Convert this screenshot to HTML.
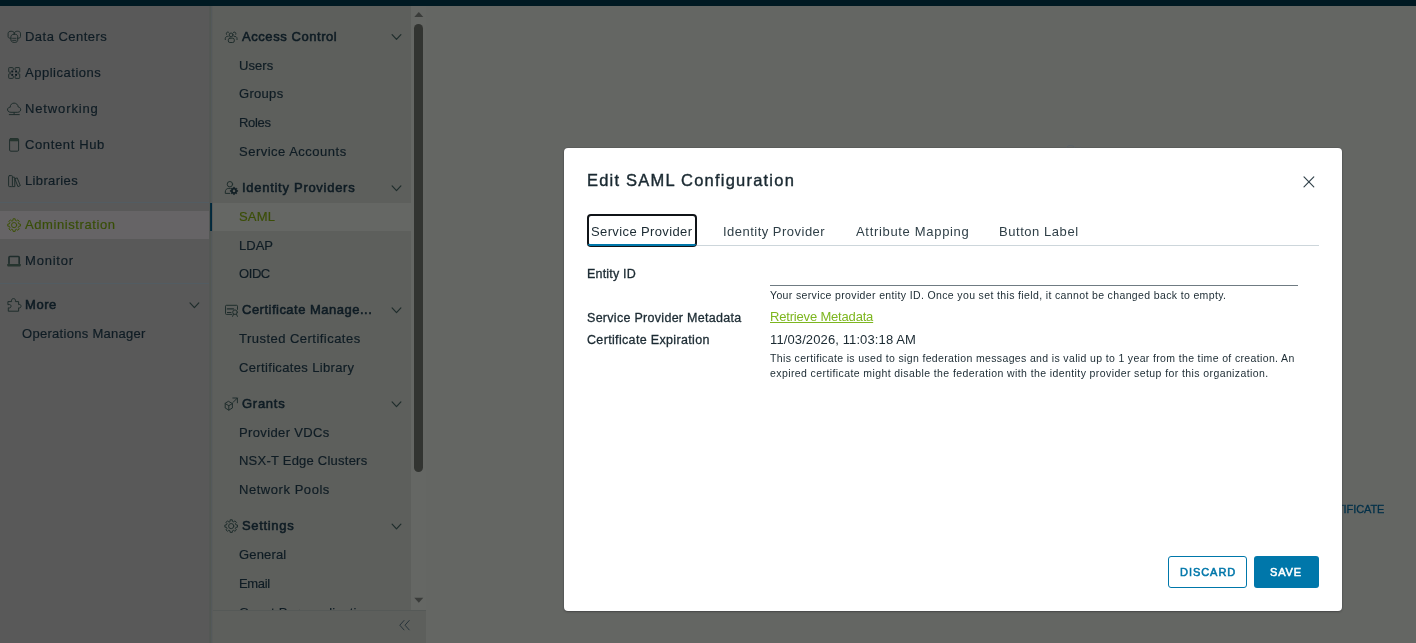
<!DOCTYPE html>
<html><head><meta charset="utf-8"><title>Edit SAML Configuration</title>
<style>
*{box-sizing:border-box;margin:0;padding:0}
html,body{width:1416px;height:643px;overflow:hidden;background:#646663;font-family:"Liberation Sans",sans-serif}
.a{position:absolute}
.t{position:absolute;will-change:transform;white-space:pre;font-family:"Liberation Sans",sans-serif}
svg{position:absolute;overflow:visible}
#top{left:0;top:0;width:1416px;height:6px;background:#001922}
#side{left:0;top:6px;width:210px;height:637px;background:#595959}
#sub{left:210px;top:6px;width:201px;height:604px;background:#5d5f5c;overflow:hidden}
#track{left:411px;top:6px;width:15px;height:604px;background:#656764}
#foot{left:210px;top:610px;width:216px;height:33px;background:#5d5f5c;border-top:1px solid #555957}
#subborder{left:210px;top:6px;width:2px;height:637px;background:linear-gradient(90deg,#525753 0,#525753 50%,#54595b 50%,#54595b 100%)}
#subedge2{left:212px;top:6px;width:1px;height:637px;background:#5a5c5a}
#sideedge{left:209px;top:6px;width:1px;height:637px;background:#545755}
.div{left:0;width:209px;height:1px;background:#525c62}
#adm{left:0;top:211px;width:209px;height:28px;background:#666466}
#saml{left:210px;top:203px;width:204px;height:28px;background:#656764}
#samlbar{left:210px;top:203px;width:2px;height:28px;background:linear-gradient(90deg,#082d3a 0,#082d3a 50%,#00283f 50%,#00283f 100%)}
#thumb{left:414px;top:24px;width:9px;height:448px;border-radius:4.5px;background:#323431}
#modal{left:564px;top:148px;width:778px;height:463px;background:#fff;border-radius:4px;box-shadow:0 1px 2px rgba(40,40,40,.4),0 0 0 0.5px rgba(70,70,75,.4)}
#tabline{left:587px;top:245px;width:732px;height:1px;background:#cdd6db}
#tabfocus{left:587px;top:214px;width:110px;height:33px;border:2px solid #101418;border-radius:4px}
#tabblue{left:588px;top:243.6px;width:108px;height:2.6px;background:#0077aa;border-radius:0 0 3px 3px}
#inputline{left:770px;top:285px;width:528px;height:1px;background:#6f7b82}
#discard{left:1168px;top:556px;width:79px;height:32px;border:1px solid #0077aa;border-radius:3px;background:#fff}
#save{left:1254px;top:556px;width:65px;height:32px;border-radius:3px;background:#0077aa}
</style></head>
<body>
<div id="app">
<header class="a" id="top"></header>
<div class="a" id="side"></div>
<div class="a" id="sub"></div>
<div class="a" id="track"></div>
<div class="a" id="foot"></div>
<div class="a" id="sideedge"></div>
<div class="a div" style="top:202px"></div>
<div class="a div" style="top:283px"></div>
<div class="a" id="adm"></div>
<div class="a" id="saml"></div>
<div class="a" id="thumb"></div>
<svg class="a" style="left:0;top:0" width="1416" height="643" viewBox="0 0 1416 643" fill="none" stroke="#1f2d2c" stroke-width="1" stroke-linecap="round" stroke-linejoin="round">
<path d="M11 38.3 C8.8 38.3 8.1 37.6 8.1 36.6 V33.2 C8.1 30.6 14.2 30.6 14.2 33.2 V34.2"/>
<path d="M17.6 38.3 C19.8 38.3 20.5 37.6 20.5 36.6 V33.2 C20.5 30.6 14.4 30.6 14.4 33.2 V34.2"/>
<path d="M10.9 36.3 C10.9 33.4 17.7 33.4 17.7 36.3 V40.4 C17.7 43.2 10.9 43.2 10.9 40.4 Z"/>
<path d="M12.6 38.3 H16 M12.6 40.4 H16" stroke-width="0.9"/>
<path d="M13.3 69.6 V68.3 C13.3 67.8 13.1 67.6 12.6 67.6 H9.4 C8.9 67.6 8.7 67.8 8.7 68.3 V71.5 C8.7 72 8.9 72.2 9.4 72.2 H10.6"/>
<path d="M15.1 69.6 V68.3 C15.1 67.8 15.3 67.6 15.8 67.6 H19 C19.5 67.6 19.7 67.8 19.7 68.3 V71.5 C19.7 72 19.5 72.2 19 72.2 H17.8"/>
<path d="M13.3 76.4 V77.7 C13.3 78.2 13.1 78.4 12.6 78.4 H9.4 C8.9 78.4 8.7 78.2 8.7 77.7 V74.5 C8.7 74 8.9 73.8 9.4 73.8 H10.6"/>
<path d="M15.1 76.4 V77.7 C15.1 78.2 15.3 78.4 15.8 78.4 H19 C19.5 78.4 19.7 78.2 19.7 77.7 V74.5 C19.7 74 19.5 73.8 19 73.8 H17.8"/>
<rect x="11.3" y="70.5" width="1.9" height="1.9" fill="#0d1a20" stroke="none"/>
<rect x="15.1" y="70.5" width="1.9" height="1.9" fill="#0d1a20" stroke="none"/>
<rect x="11.3" y="73.9" width="1.9" height="1.9" fill="#0d1a20" stroke="none"/>
<rect x="15.1" y="73.9" width="1.9" height="1.9" fill="#0d1a20" stroke="none"/>
<path d="M10.6 112.3 C6.4 112.3 6.6 107.2 10.2 107.3 C10.2 101.6 17.8 101.9 18.2 107 C21.6 107.2 21.6 112.3 18 112.3 Z"/>
<path d="M14.1 112.5 V114.4 M9.3 114.6 H19.3"/>
<rect x="9.6" y="138.6" width="9" height="12.6" rx="1.2"/>
<rect x="9.8" y="138.2" width="8.6" height="3.1" rx="0.8" fill="#26352f" stroke="none"/>
<rect x="8.6" y="175.6" width="3.8" height="11" rx="0.8"/>
<path d="M12.6 177.2 H14.2 C14.6 177.2 14.8 177.4 14.8 177.8 V186.6 H12.6"/>
<path d="M15.2 178.6 L17.2 177.9 L20.3 185.6 L18.3 186.5 Z"/>
<path d="M12.92 220.34 L13.05 218.79 L15.15 218.79 L15.28 220.34 L16.63 220.90 L17.82 219.89 L19.31 221.38 L18.30 222.57 L18.86 223.92 L20.41 224.05 L20.41 226.15 L18.86 226.28 L18.30 227.63 L19.31 228.82 L17.82 230.31 L16.63 229.30 L15.28 229.86 L15.15 231.41 L13.05 231.41 L12.92 229.86 L11.57 229.30 L10.38 230.31 L8.89 228.82 L9.90 227.63 L9.34 226.28 L7.79 226.15 L7.79 224.05 L9.34 223.92 L9.90 222.57 L8.89 221.38 L10.38 219.89 L11.57 220.90Z" stroke="#3f5208"/>
<circle cx="14.1" cy="225.1" r="2.6" stroke="#3f5208"/>
<path d="M9 263.2 V257.4 C9 256.8 9.3 256.5 9.9 256.5 H18.3 C18.9 256.5 19.2 256.8 19.2 257.4 V263.2" stroke-width="1.7"/>
<path d="M7.2 264 H20.8 V265.2 C20.8 266 20.3 266.5 19.5 266.5 H8.5 C7.7 266.5 7.2 266 7.2 265.2 Z" fill="#26352f" stroke="none"/>
<path d="M8.3 301.6 H11.6 C11 299.4 12.4 298.6 13.5 298.6 C14.6 298.6 16 299.4 15.4 301.6 H18.6 V304.6 C20.4 304 21 305.2 21 306.2 C21 307.2 20.4 308.4 18.6 307.8 V311.2 H8.3 V307.8 C10.4 308.4 11 307.2 11 306.2 C11 305.2 10.4 304 8.3 304.6 Z"/>
<path d="M190.0 302.84999999999997 L194.4 307.55 L198.8 302.84999999999997" stroke="#1f2d2c" stroke-width="1.2" fill="none" stroke-linecap="round" stroke-linejoin="round"/>
<circle cx="231.1" cy="34.9" r="1.9"/>
<rect x="228.3" y="38.2" width="6" height="4.3" rx="1.6"/>
<path d="M226.4 34.3 C225.6 32.2 228.2 31.2 229 32.6 M235.8 34.3 C236.6 32.2 234 31.2 233.2 32.6"/>
<path d="M225.3 39.6 V38.4 C225.3 37 226.6 36.2 228.2 36.3 M237 39.6 V38.4 C237 37 235.7 36.2 234.1 36.3"/>
<path d="M392.1 34.65 L396.5 39.35 L400.9 34.65" stroke="#1f2d2c" stroke-width="1.2" fill="none" stroke-linecap="round" stroke-linejoin="round"/>
<circle cx="229.9" cy="184.2" r="2.7"/>
<path d="M230.2 188.4 H228.8 C226.6 188.4 225.3 189.8 225.3 192 V193.4 H229.8"/>
<path d="M233.27 188.30 L233.45 187.24 L234.55 187.24 L234.73 188.30 L235.32 188.54 L236.20 187.92 L236.98 188.70 L236.36 189.58 L236.60 190.17 L237.66 190.35 L237.66 191.45 L236.60 191.63 L236.36 192.22 L236.98 193.10 L236.20 193.88 L235.32 193.26 L234.73 193.50 L234.55 194.56 L233.45 194.56 L233.27 193.50 L232.68 193.26 L231.80 193.88 L231.02 193.10 L231.64 192.22 L231.40 191.63 L230.34 191.45 L230.34 190.35 L231.40 190.17 L231.64 189.58 L231.02 188.70 L231.80 187.92 L232.68 188.54Z" fill="#0f1c22" stroke="#0f1c22" stroke-width="0.5"/>
<circle cx="234" cy="190.9" r="1.3" fill="#5d5f5c" stroke="none"/>
<path d="M392.1 185.95000000000002 L396.5 190.65 L400.9 185.95000000000002" stroke="#1f2d2c" stroke-width="1.2" fill="none" stroke-linecap="round" stroke-linejoin="round"/>
<path d="M231.8 314.4 H226.4 C225.8 314.4 225.5 314.1 225.5 313.5 V306.2 C225.5 305.6 225.8 305.3 226.4 305.3 H236.6 C237.2 305.3 237.5 305.6 237.5 306.2 V309.4"/>
<path d="M227.4 308.9 H233.4" stroke-width="1.4"/><path d="M227.4 312.5 H231" stroke-width="1"/>
<circle cx="235" cy="312.2" r="2.3"/>
<path d="M233.5 314.2 L232.6 316.4 M236.5 314.2 L237.4 316.4"/>
<path d="M392.1 307.95 L396.5 312.65000000000003 L400.9 307.95" stroke="#1f2d2c" stroke-width="1.2" fill="none" stroke-linecap="round" stroke-linejoin="round"/>
<path d="M228.8 401.5 L232.4 403.6 V408 L228.8 410.1 L225.2 408 V403.6 Z M225.2 403.6 L228.8 405.7 L232.4 403.6 M228.8 405.7 V410.1"/>
<path d="M233 402.4 L237.3 398.1 M232.8 398 H237.4 V402.8"/>
<path d="M392.1 401.95 L396.5 406.65000000000003 L400.9 401.95" stroke="#1f2d2c" stroke-width="1.2" fill="none" stroke-linecap="round" stroke-linejoin="round"/>
<path d="M230.02 521.34 L230.15 519.79 L232.25 519.79 L232.38 521.34 L233.73 521.90 L234.92 520.89 L236.41 522.38 L235.40 523.57 L235.96 524.92 L237.51 525.05 L237.51 527.15 L235.96 527.28 L235.40 528.63 L236.41 529.82 L234.92 531.31 L233.73 530.30 L232.38 530.86 L232.25 532.41 L230.15 532.41 L230.02 530.86 L228.67 530.30 L227.48 531.31 L225.99 529.82 L227.00 528.63 L226.44 527.28 L224.89 527.15 L224.89 525.05 L226.44 524.92 L227.00 523.57 L225.99 522.38 L227.48 520.89 L228.67 521.90Z"/>
<circle cx="231.2" cy="526.1" r="2.6"/>
<path d="M392.1 524.15 L396.5 528.85 L400.9 524.15" stroke="#1f2d2c" stroke-width="1.2" fill="none" stroke-linecap="round" stroke-linejoin="round"/>
</svg>
<div class="a" id="navtext" style="left:0;top:0;width:1416px;height:610px;overflow:hidden">
<span class="t" style="left:24.52px;top:30.00px;font-size:13px;line-height:13px;font-weight:400;color:#0f1c24;letter-spacing:0.478px;-webkit-text-stroke:0.18px #0f1c24;">Data Centers</span>
<span class="t" style="left:24.52px;top:66.00px;font-size:13px;line-height:13px;font-weight:400;color:#0f1c24;letter-spacing:0.522px;-webkit-text-stroke:0.18px #0f1c24;">Applications</span>
<span class="t" style="left:24.52px;top:102.00px;font-size:13px;line-height:13px;font-weight:400;color:#0f1c24;letter-spacing:0.869px;-webkit-text-stroke:0.18px #0f1c24;">Networking</span>
<span class="t" style="left:24.52px;top:138.00px;font-size:13px;line-height:13px;font-weight:400;color:#0f1c24;letter-spacing:0.625px;-webkit-text-stroke:0.18px #0f1c24;">Content Hub</span>
<span class="t" style="left:24.52px;top:174.00px;font-size:13px;line-height:13px;font-weight:400;color:#0f1c24;letter-spacing:0.349px;-webkit-text-stroke:0.18px #0f1c24;">Libraries</span>
<span class="t" style="left:24.52px;top:218.00px;font-size:13px;line-height:13px;font-weight:400;color:#384e06;letter-spacing:0.583px;-webkit-text-stroke:0.18px #384e06;">Administration</span>
<span class="t" style="left:24.52px;top:254.00px;font-size:13px;line-height:13px;font-weight:400;color:#0f1c24;letter-spacing:0.798px;-webkit-text-stroke:0.18px #0f1c24;">Monitor</span>
<span class="t" style="left:24.52px;top:298.00px;font-size:13px;line-height:13px;font-weight:400;color:#0f1c24;letter-spacing:0.575px;-webkit-text-stroke:0.55px #0f1c24;">More</span>
<span class="t" style="left:22.12px;top:327.00px;font-size:13px;line-height:13px;font-weight:400;color:#0f1c24;letter-spacing:0.290px;-webkit-text-stroke:0.18px #0f1c24;">Operations Manager</span>
<span class="t" style="left:241.52px;top:30.00px;font-size:13px;line-height:13px;font-weight:400;color:#0f1c24;letter-spacing:0.564px;-webkit-text-stroke:0.55px #0f1c24;">Access Control</span>
<span class="t" style="left:238.92px;top:59.00px;font-size:13px;line-height:13px;font-weight:400;color:#0f1c24;letter-spacing:0.074px;-webkit-text-stroke:0.18px #0f1c24;">Users</span>
<span class="t" style="left:238.92px;top:87.00px;font-size:13px;line-height:13px;font-weight:400;color:#0f1c24;letter-spacing:0.302px;-webkit-text-stroke:0.18px #0f1c24;">Groups</span>
<span class="t" style="left:238.92px;top:116.00px;font-size:13px;line-height:13px;font-weight:400;color:#0f1c24;letter-spacing:-0.300px;-webkit-text-stroke:0.18px #0f1c24;">Roles</span>
<span class="t" style="left:238.92px;top:145.00px;font-size:13px;line-height:13px;font-weight:400;color:#0f1c24;letter-spacing:0.495px;-webkit-text-stroke:0.18px #0f1c24;">Service Accounts</span>
<span class="t" style="left:241.52px;top:181.00px;font-size:13px;line-height:13px;font-weight:400;color:#0f1c24;letter-spacing:0.718px;-webkit-text-stroke:0.55px #0f1c24;">Identity Providers</span>
<span class="t" style="left:238.92px;top:210.00px;font-size:13px;line-height:13px;font-weight:400;color:#3b4e06;letter-spacing:0.181px;-webkit-text-stroke:0.18px #3b4e06;">SAML</span>
<span class="t" style="left:238.92px;top:239.00px;font-size:13px;line-height:13px;font-weight:400;color:#0f1c24;letter-spacing:0.027px;-webkit-text-stroke:0.18px #0f1c24;">LDAP</span>
<span class="t" style="left:238.92px;top:267.00px;font-size:13px;line-height:13px;font-weight:400;color:#0f1c24;letter-spacing:-0.417px;-webkit-text-stroke:0.18px #0f1c24;">OIDC</span>
<span class="t" style="left:241.52px;top:303.00px;font-size:13px;line-height:13px;font-weight:400;color:#0f1c24;letter-spacing:0.490px;-webkit-text-stroke:0.55px #0f1c24;">Certificate Manage...</span>
<span class="t" style="left:238.92px;top:332.00px;font-size:13px;line-height:13px;font-weight:400;color:#0f1c24;letter-spacing:0.469px;-webkit-text-stroke:0.18px #0f1c24;">Trusted Certificates</span>
<span class="t" style="left:238.92px;top:361.00px;font-size:13px;line-height:13px;font-weight:400;color:#0f1c24;letter-spacing:0.346px;-webkit-text-stroke:0.18px #0f1c24;">Certificates Library</span>
<span class="t" style="left:241.52px;top:397.00px;font-size:13px;line-height:13px;font-weight:400;color:#0f1c24;letter-spacing:0.727px;-webkit-text-stroke:0.55px #0f1c24;">Grants</span>
<span class="t" style="left:238.92px;top:426.00px;font-size:13px;line-height:13px;font-weight:400;color:#0f1c24;letter-spacing:0.365px;-webkit-text-stroke:0.18px #0f1c24;">Provider VDCs</span>
<span class="t" style="left:238.92px;top:454.00px;font-size:13px;line-height:13px;font-weight:400;color:#0f1c24;letter-spacing:0.229px;-webkit-text-stroke:0.18px #0f1c24;">NSX-T Edge Clusters</span>
<span class="t" style="left:238.92px;top:483.00px;font-size:13px;line-height:13px;font-weight:400;color:#0f1c24;letter-spacing:0.545px;-webkit-text-stroke:0.18px #0f1c24;">Network Pools</span>
<span class="t" style="left:241.52px;top:519.00px;font-size:13px;line-height:13px;font-weight:400;color:#0f1c24;letter-spacing:0.667px;-webkit-text-stroke:0.55px #0f1c24;">Settings</span>
<span class="t" style="left:238.92px;top:548.00px;font-size:13px;line-height:13px;font-weight:400;color:#0f1c24;letter-spacing:0.167px;-webkit-text-stroke:0.18px #0f1c24;">General</span>
<span class="t" style="left:238.92px;top:577.00px;font-size:13px;line-height:13px;font-weight:400;color:#0f1c24;letter-spacing:-0.316px;-webkit-text-stroke:0.18px #0f1c24;">Email</span>
<span class="t" style="left:239.42px;top:606.00px;font-size:13px;line-height:13px;font-weight:400;color:#0f1c24;letter-spacing:0.263px;-webkit-text-stroke:0.18px #0f1c24;">Guest Personalization</span>
<span class="t" style="left:1336.94px;top:503.69px;font-size:11px;line-height:11px;font-weight:400;color:#003049;letter-spacing:-0.104px;-webkit-text-stroke:0.3px #003049;">TIFICATE</span>
</div>
<div class="a" id="foot2" style="left:210px;top:610px;width:216px;height:33px;background:#5d5f5c;border-top:1px solid #555957"></div>
<div class="a" id="subborder"></div>
<div class="a" id="subedge2"></div>
<div class="a" id="samlbar"></div>
</div>
<div id="dialog" role="dialog" aria-modal="true" aria-label="Edit SAML Configuration">
<div class="a" id="modal"></div>
<div class="a" id="tabline"></div>
<div class="a" id="tabfocus"></div>
<div class="a" id="tabblue"></div>
<div class="a" id="inputline"></div>
<div class="a" id="discard"></div>
<div class="a" id="save"></div>
<span class="t" style="left:586.51px;top:172.23px;font-size:16.5px;line-height:16.5px;font-weight:400;color:#1b2a32;letter-spacing:1.216px;-webkit-text-stroke:0.4px #1b2a32;">Edit SAML Configuration</span>
<span class="t" style="left:590.62px;top:225.00px;font-size:13px;line-height:13px;font-weight:400;color:#1b2a32;letter-spacing:0.378px;">Service Provider</span>
<span class="t" style="left:723.02px;top:225.00px;font-size:13px;line-height:13px;font-weight:400;color:#2f3f47;letter-spacing:0.482px;">Identity Provider</span>
<span class="t" style="left:855.72px;top:225.00px;font-size:13px;line-height:13px;font-weight:400;color:#2f3f47;letter-spacing:0.678px;">Attribute Mapping</span>
<span class="t" style="left:998.52px;top:225.00px;font-size:13px;line-height:13px;font-weight:400;color:#2f3f47;letter-spacing:0.549px;">Button Label</span>
<span class="t" style="left:586.65px;top:268.22px;font-size:12.5px;line-height:12.5px;font-weight:400;color:#1b2a32;letter-spacing:0.184px;-webkit-text-stroke:0.3px #1b2a32;">Entity ID</span>
<span class="t" style="left:769.67px;top:290.11px;font-size:10.5px;line-height:10.5px;font-weight:400;color:#1b2a32;letter-spacing:0.363px;">Your service provider entity ID. Once you set this field, it cannot be changed back to empty.</span>
<span class="t" style="left:586.65px;top:312.02px;font-size:12.5px;line-height:12.5px;font-weight:400;color:#1b2a32;letter-spacing:0.289px;-webkit-text-stroke:0.3px #1b2a32;">Service Provider Metadata</span>
<span class="t" style="left:769.52px;top:309.80px;font-size:13px;line-height:13px;font-weight:400;color:#7db61f;letter-spacing:-0.180px;text-decoration:underline;text-underline-offset:0.6px;text-decoration-thickness:1px;">Retrieve Metadata</span>
<span class="t" style="left:586.65px;top:334.02px;font-size:12.5px;line-height:12.5px;font-weight:400;color:#1b2a32;letter-spacing:0.338px;-webkit-text-stroke:0.3px #1b2a32;">Certificate Expiration</span>
<span class="t" style="left:769.52px;top:332.60px;font-size:13px;line-height:13px;font-weight:400;color:#1b2a32;letter-spacing:0.113px;">11/03/2026, 11:03:18 AM</span>
<span class="t" style="left:769.67px;top:353.11px;font-size:10.5px;line-height:10.5px;font-weight:400;color:#1b2a32;letter-spacing:0.356px;">This certificate is used to sign federation messages and is valid up to 1 year from the time of creation. An</span>
<span class="t" style="left:769.67px;top:367.91px;font-size:10.5px;line-height:10.5px;font-weight:400;color:#1b2a32;letter-spacing:0.406px;">expired certificate might disable the federation with the identity provider setup for this organization.</span>
<span class="t" style="left:1179.94px;top:566.89px;font-size:11px;line-height:11px;font-weight:400;color:#0077aa;letter-spacing:0.956px;-webkit-text-stroke:0.55px #0077aa;">DISCARD</span>
<span class="t" style="left:1270.14px;top:566.89px;font-size:11px;line-height:11px;font-weight:400;color:#ffffff;letter-spacing:0.873px;-webkit-text-stroke:0.55px #ffffff;">SAVE</span>
<svg class="a" style="left:0;top:0" width="1416" height="643" viewBox="0 0 1416 643" fill="none">
<path d="M414.3 17 L418.8 12 L423.3 17 Z" fill="#3a3c3a"/>
<path d="M414.3 597.8 L423.3 597.8 L418.8 602.8 Z" fill="#3a3c3a"/>
<path d="M404 620.5 L399.8 625.2 L404 629.9 M409.2 620.5 L405 625.2 L409.2 629.9" stroke="#27333a" stroke-width="1" stroke-linecap="round" stroke-linejoin="round"/>
<path d="M1066.8 147.6 C1067.5 145 1073 144.6 1074.6 147.6 M1080 147.4 h0.8" stroke="#5a6168" stroke-width="1" fill="none"/>
<path d="M1304 176.8 L1313.8 186.9 M1313.8 176.8 L1304 186.9" stroke="#31414a" stroke-width="1.15" stroke-linecap="round"/>
</svg>
</div>
</body></html>
